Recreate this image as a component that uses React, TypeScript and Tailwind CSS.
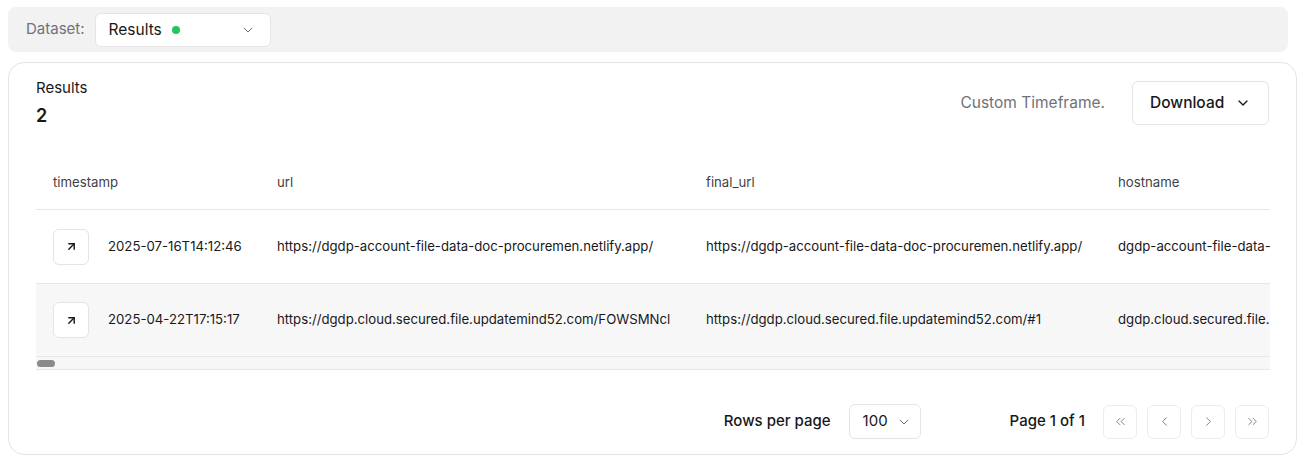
import React from "react";
import { ChevronDown, ArrowUpRight, ChevronsLeft, ChevronLeft, ChevronRight, ChevronsRight } from "lucide-react";

const rows = [
  {
    ts: "2025-07-16T14:12:46",
    url: "https://dgdp-account-file-data-doc-procuremen.netlify.app/",
    final: "https://dgdp-account-file-data-doc-procuremen.netlify.app/",
    host: "dgdp-account-file-data-doc-procuremen.netlify.app",
  },
  {
    ts: "2025-04-22T17:15:17",
    url: "https://dgdp.cloud.secured.file.updatemind52.com/FOWSMNcl",
    final: "https://dgdp.cloud.secured.file.updatemind52.com/#1",
    host: "dgdp.cloud.secured.file.updatemind52.com",
  },
];

export default function App() {
  return (
    <div className="w-[1306px] h-[462px] bg-white px-2 pt-[7px] text-[#18181b]" style={{ fontFamily: "Inter, 'Noto Sans', sans-serif" }}>
      <div className="w-[1280px] h-[45px] bg-[#f2f2f2] rounded-lg flex items-center pl-[18px] gap-[10px]">
        <span className="text-[15px] text-[#71717a]">Dataset:</span>
        <div className="w-[176px] h-[34px] bg-white border border-[#e4e4e7] rounded-md flex items-center pl-[13px] pr-[14px]">
          <span className="text-[15.5px] text-[#18181b]">Results</span>
          <span className="ml-[10px] w-[8px] h-[8px] rounded-full bg-[#22c55e]" />
          <ChevronDown className="ml-auto w-4 h-4 text-[#71717a]" strokeWidth={1.5} />
        </div>
      </div>

      <div className="mt-[10px] w-[1289px] h-[393px] border border-[#e4e4e7] rounded-2xl px-[27px] pt-[17px] pb-[15px] flex flex-col">
        <div className="flex items-start">
          <div className="flex flex-col">
            <span className="text-[15px] leading-[20px] mt-[-2px]">Results</span>
            <span className="text-[18px] font-semibold leading-[24px] mt-[6px]">2</span>
          </div>
          <div className="ml-auto flex items-center gap-[27px] mt-[1px]">
            <span className="text-[15.5px] text-[#71717a]">Custom Timeframe.</span>
            <div className="w-[137px] h-[44px] border border-[#e4e4e7] rounded-md flex items-center pl-[17px]">
              <span className="text-[15.5px] font-medium">Download</span>
              <ChevronDown className="ml-[11px] w-4 h-4 text-[#18181b]" strokeWidth={2} />
            </div>
          </div>
        </div>

        <div className="mt-[32px] w-[1234px] overflow-hidden">
          <div className="w-[1600px] text-[13.2px]">
            <div className="flex h-[50px] items-center pb-[3px] border-b border-[#e5e7eb] text-[#3f3f46]">
              <div className="w-[224px] pl-[17px]">timestamp</div>
              <div className="w-[429px] pl-[17px]">url</div>
              <div className="w-[412px] pl-[17px]">final_url</div>
              <div className="w-[400px] pl-[17px]">hostname</div>
            </div>
            {rows.map((r, i) => (
              <div key={i} className={`flex items-center ${i === 0 ? "h-[74px] border-b border-[#e5e7eb]" : "h-[72px] bg-[#f7f7f7]"}`}>
                <div className="w-[224px] pl-[17px] flex items-center gap-[19px]">
                  <div className="w-[36px] h-[36px] bg-white border border-[#e4e4e7] rounded-md flex items-center justify-center">
                    <ArrowUpRight className="w-[13px] h-[13px] text-[#18181b]" strokeWidth={2.6} />
                  </div>
                  <span>{r.ts}</span>
                </div>
                <div className="w-[429px] pl-[17px] whitespace-nowrap">{r.url}</div>
                <div className="w-[412px] pl-[17px] whitespace-nowrap">{r.final}</div>
                <div className="w-[400px] pl-[17px] whitespace-nowrap">{r.host}</div>
              </div>
            ))}
          </div>
          <div className="h-[14px] bg-[#f7f7f7] border-t border-b border-[#e5e7eb] flex items-center pl-[1px]">
            <div className="w-[18px] h-[7px] rounded-full bg-[#8a8a8a]" />
          </div>
        </div>

        <div className="mt-auto flex items-center justify-end">
          <span className="text-[15px] font-medium">Rows per page</span>
          <div className="ml-[18px] w-[72px] h-[35px] border border-[#e4e4e7] rounded-md flex items-center pl-[13px] pr-[8px]">
            <span className="text-[15px]">100</span>
            <ChevronDown className="ml-auto w-4 h-4 text-[#71717a]" strokeWidth={1.5} />
          </div>
          <span className="ml-[89px] text-[15px] font-medium">Page 1 of 1</span>
          <div className="ml-[18px] flex gap-[10px]">
            {[ChevronsLeft, ChevronLeft, ChevronRight, ChevronsRight].map((Icon, i) => (
              <div key={i} className="w-[34px] h-[34px] border border-[#ececee] rounded-md flex items-center justify-center">
                <Icon className="w-[15px] h-[15px] text-[#7a7a80]" strokeWidth={1.5} />
              </div>
            ))}
          </div>
        </div>
      </div>
    </div>
  );
}
